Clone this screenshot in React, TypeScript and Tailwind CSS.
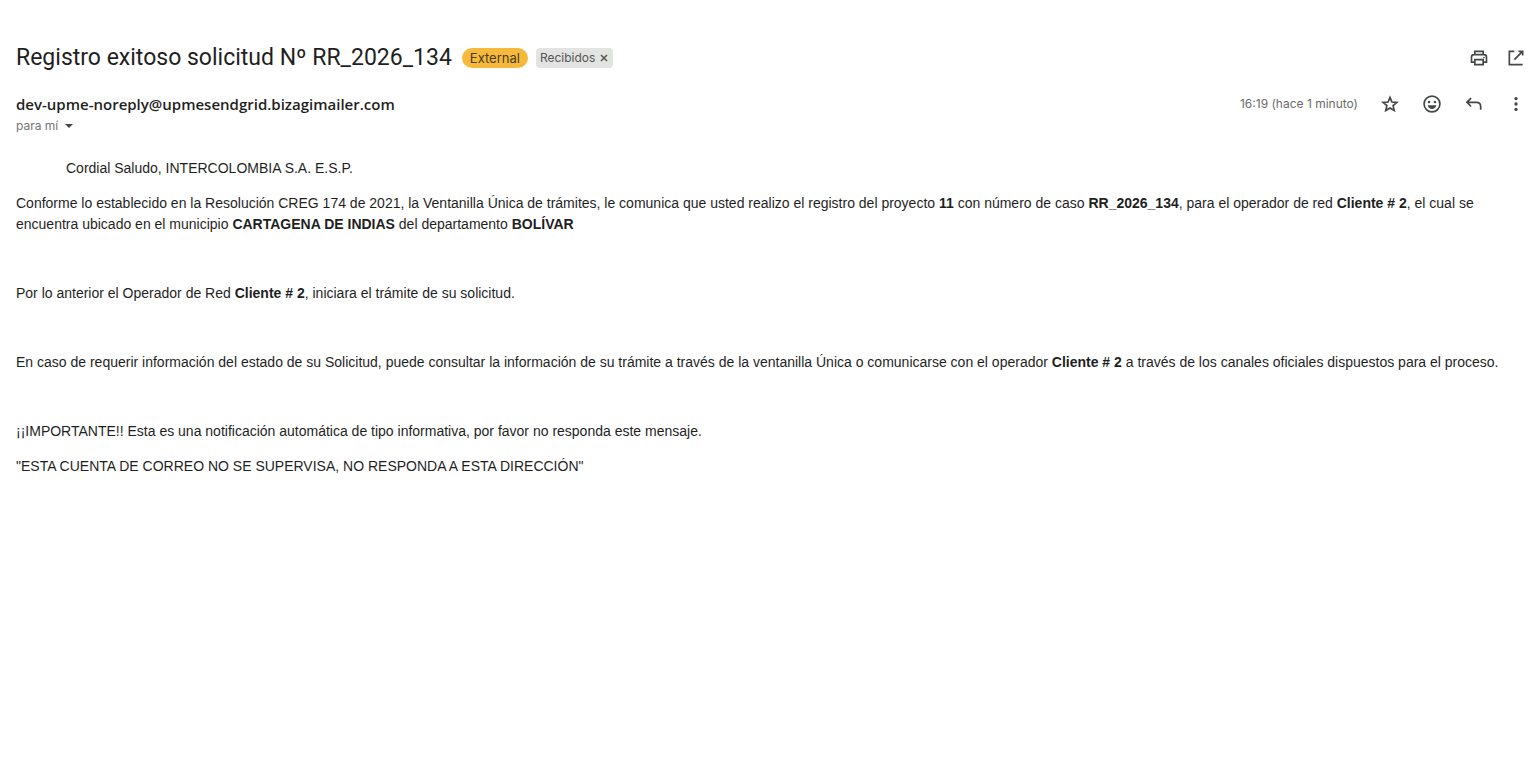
import type { ReactNode } from 'react';

const client = <b>Cliente # 2</b>;

function IconButton({ label, children }: { label: string; children: ReactNode }) {
  return (
    <button type="button" aria-label={label} className="flex size-5 items-center justify-center text-[#444746]">
      <svg viewBox="0 0 24 24" className="size-5" fill="none" stroke="currentColor" strokeWidth="2" aria-hidden="true">
        {children}
      </svg>
    </button>
  );
}

export default function App() {
  return (
    <div className="min-h-screen bg-white pt-10 pl-4 font-['Inter',sans-serif] text-[#1f1f1f]">
      {/* Subject */}
      <header className="flex h-9 items-center justify-between pr-2.5">
        <div className="flex items-center">
          <h1 className="font-['Roboto',sans-serif] text-[23px] leading-7">Registro exitoso solicitud Nº RR_2026_134</h1>
          <span className="ml-2.5 rounded-full bg-[#f6b93b] px-2 text-[13px] leading-5 text-[#4a3d1c]">External</span>
          <span className="ml-2 flex items-center gap-1 rounded-sm bg-[#e2e4e2] px-1 text-xs leading-5 text-[#555]">
            Recibidos
            <button type="button" aria-label="Quitar etiqueta Recibidos" className="flex size-2.5 items-center justify-center">
              <svg viewBox="0 0 8 8" className="size-2" stroke="currentColor" strokeWidth="1.5" aria-hidden="true">
                <path d="m1 1 6 6M7 1 1 7" />
              </svg>
            </button>
          </span>
        </div>
        <div className="flex gap-[17px]">
          <IconButton label="Imprimir todo">
            <path d="M7 8V4h10v4M7 17H3v-6q0-3 3-3h12q3 0 3 3v6h-4M7 14h10v6H7z" />
            <circle cx="18" cy="11.500" r="1" fill="currentColor" stroke="none" />
          </IconButton>
          <IconButton label="Abrir en ventana nueva">
            <path d="M10 4H4v16h16M10 14 19 5M15 4h5v5" />
          </IconButton>
        </div>
      </header>

      {/* Sender */}
      <div className="mt-4 flex items-start justify-between pr-2.5">
        <div>
          <h2 className="font-['Open_Sans',sans-serif] text-[15px] leading-6 font-semibold">
            dev-upme-noreply@upmesendgrid.bizagimailer.com
          </h2>
          <button type="button" className="flex items-center gap-1.5 text-xs leading-5 text-[#757575]">
            para mí
            <svg viewBox="0 0 10 5" className="h-[5px] w-2.5" fill="#444746" aria-hidden="true">
              <path d="M1 0h8L5 4z" />
            </svg>
          </button>
        </div>
        <div className="flex h-6 items-center gap-[22px]">
          <time className="text-xs text-[#6b6b6b]">16:19 (hace 1 minuto)</time>
          <IconButton label="Destacar">
            <path d="m12 4 2.300 5.600 6 .5-4.600 3.900 1.400 5.900-5.100-3.100-5.100 3.100 1.400-5.900L3.700 10.100l6-.5z" />
          </IconButton>
          <IconButton label="Reaccionar">
            <circle cx="12" cy="12" r="9.500" />
            <g fill="currentColor" stroke="none">
              <circle cx="8.500" cy="9.500" r="1.500" />
              <circle cx="15.500" cy="9.500" r="1.500" />
              <path d="M6.700 13.500h10.600q-1.400 4.500-5.300 4.500t-5.300-4.500z" />
            </g>
          </IconButton>
          <IconButton label="Responder">
            <path d="M8.500 5 3.500 10l5 5M4 10h11q5 0 5 5v4" />
          </IconButton>
          <IconButton label="Más">
            <g fill="currentColor" stroke="none">
              <circle cx="12" cy="5.500" r="2" />
              <circle cx="12" cy="12" r="2" />
              <circle cx="12" cy="18.500" r="2" />
            </g>
          </IconButton>
        </div>
      </div>

      {/* Message body */}
      <main className="mt-[22px] pr-4 font-['Liberation_Sans',Arial,sans-serif] text-sm leading-[21px]">
        <p className="ml-[50px]">Cordial Saludo, INTERCOLOMBIA S.A. E.S.P.</p>
        <p className="mt-3.5">
          Conforme lo establecido en la Resolución CREG 174 de 2021, la Ventanilla Única de trámites, le comunica que usted
          realizo el registro del proyecto <b>11</b> con número de caso <b>RR_2026_134</b>, para el operador de red {client},
          el cual se encuentra ubicado en el municipio <b>CARTAGENA DE INDIAS</b> del departamento <b>BOLÍVAR</b>
        </p>
        <p className="mt-12">Por lo anterior el Operador de Red {client}, iniciara el trámite de su solicitud.</p>
        <p className="mt-12">
          En caso de requerir información del estado de su Solicitud, puede consultar la información de su trámite a través
          de la ventanilla Única o comunicarse con el operador {client} a través de los canales oficiales dispuestos para el
          proceso.
        </p>
        <p className="mt-12">
          ¡¡IMPORTANTE!! Esta es una notificación automática de tipo informativa, por favor no responda este mensaje.
        </p>
        <p className="mt-3.5">"ESTA CUENTA DE CORREO NO SE SUPERVISA, NO RESPONDA A ESTA DIRECCIÓN"</p>
      </main>
    </div>
  );
}
